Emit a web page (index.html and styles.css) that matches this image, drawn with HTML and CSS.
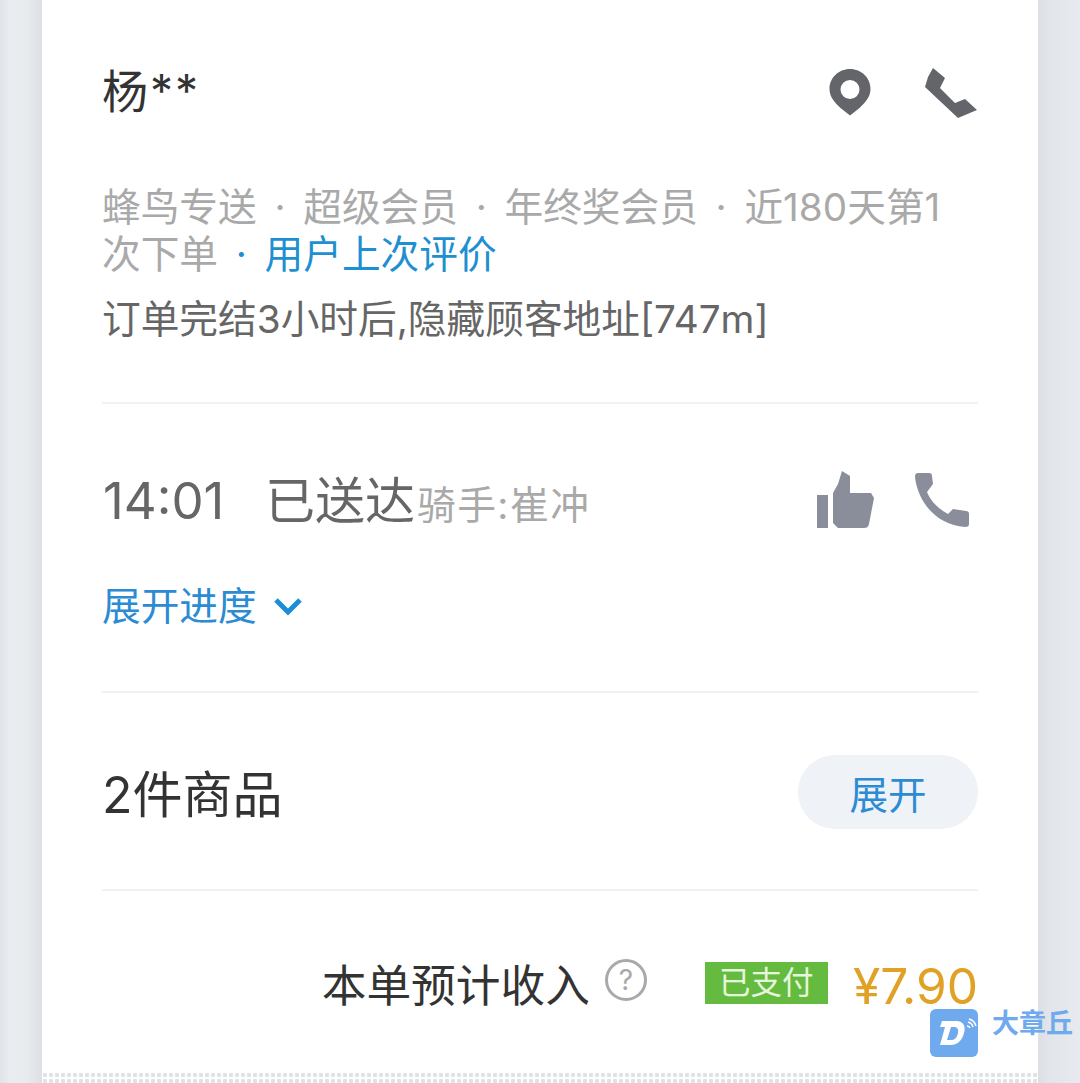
FILE: index.html
```html
<!DOCTYPE html>
<html lang="zh">
<head>
<meta charset="utf-8">
<title>订单详情</title>
<link rel="stylesheet" href="styles.css">
</head>
<body>
<main class="card">
  <section class="sec customer">
    <div class="row name-row">
      <div class="name">杨**</div>
      <div class="icons top-icons">
        <svg width="44" height="48" viewBox="0 0 44 48"><path fill="#63656b" fill-rule="evenodd" d="M22 1C10.400 1 1.500 10 1.500 21c0 8 5 13 11 19L22 47.500 31.500 40c6-6 11-11 11-19C42.500 10 33.600 1 22 1zm0 11a9.500 9.500 0 1 1 0 19 9.500 9.500 0 0 1 0-19z"/></svg>
        <svg width="54" height="54" viewBox="0 0 54 54"><path fill="#63656b" d="M8 3 20 13 15 23 30 38 40 34 52 45 33 53 0 22 3 12z"/></svg>
      </div>
    </div>
    <p class="tags">蜂鸟专送<span class="sep">·</span>超级会员<span class="sep">·</span>年终奖会员<span class="sep">·</span>近180天第1次下单<span class="sep blue">·</span><span class="blue">用户上次评价</span></p>
    <p class="addr">订单完结3小时后,隐藏顾客地址[747m]</p>
  </section>
  <section class="sec rider">
    <div class="row status-row">
      <div class="status"><span class="time">14:01</span><span class="state">已送达</span><span class="who">骑手:崔冲</span></div>
      <div class="icons rider-icons">
        <svg width="58" height="58" viewBox="0 0 58 58"><path fill="#8a8e9b" d="M1 24h11v33H1zM17 22 22 13 26 0 34 5V22H55L58 27 53 53C52 56 51 57 48 57H22L17 52z"/></svg>
        <svg width="55" height="55" viewBox="0 0 55 55"><path fill="#8a8e9b" d="M3 0H14C16 0 17 1 17 3L18 11 12 19C16 29 24 36 33 41L38 36 51 38C53 38 54 39 54 41V51C54 53 53 54 50 54 22 52 3 30 0 4 0 1 1 0 3 0z"/></svg>
      </div>
    </div>
    <div class="expand">展开进度
      <svg width="30" height="20" viewBox="0 0 30 20"><path fill="none" stroke="#1a8fd8" stroke-width="5" d="M3 3 15 15 27 3"/></svg>
    </div>
  </section>
  <section class="sec goods">
    <div class="count">2件商品</div>
    <button class="pill">展开</button>
  </section>
  <section class="income">
    <span class="inc-label">本单预计收入</span>
    <span class="help">?</span>
    <span class="paid">已支付</span>
    <span class="price">¥7.90</span>
  </section>
  <div class="dots"></div>
</main>
<div class="mark">
  <svg width="48" height="48" viewBox="0 0 48 48"><rect width="48" height="48" rx="6" fill="#6fa9ee"/><path fill="#fff" fill-rule="evenodd" d="M12 12H26C34 12 36 18 34 24 32 32 27 36 21 36H10L15 18H10zM21 18 17 31H22C25 31 27 28 28 24 29 20 27 18 24 18z"/><path fill="none" stroke="#fff" stroke-width="1.500" d="M37 17a3 3 0 0 1 3 2M38 13a7 7 0 0 1 5 5M39 10a10 10 0 0 1 7 7"/></svg>
  <span class="mark-text">大章丘</span>
</div>
</body>
</html>
```
FILE: styles.css
```css
* { box-sizing: border-box; }
html, body { margin: 0; height: 1083px; overflow: hidden; }
body {
  position: relative;
  background: linear-gradient(90deg, #e0e4e9 0, #e9edf0 10px, #e7ebee 28px, #dcdfe3 42px, #dcdfe3 1038px, #e2e5e9 1050px, #e7ebef 1080px);
  font-family: Inter, "Noto Sans CJK SC", sans-serif;
  color: #333;
}
.card {
  position: relative;
  width: 996px;
  height: 1083px;
  margin-left: 42px;
  background: #fff;
  padding: 0 60px;
}
.sec { border-bottom: 2px solid #edf2f5; }
.row { display: flex; justify-content: space-between; align-items: center; }
.customer { height: 404px; padding-top: 64px; }
.name-row { height: 56px; }
.name { font-size: 46px; line-height: 48px; padding-bottom: 2px; letter-spacing: 2px; color: #333; }
.icons { display: flex; align-items: center; gap: 53px; }
.top-icons { margin-right: -1px; }
.tags {
  margin: 64px 0 0;
  font-size: 38.700px;
  line-height: 47px;
  color: #a9a9a9;
  width: 850px;
}
.sep { display: inline-block; width: 46.500px; text-align: center; }
.blue { color: #1e8fd0; }
.addr { margin: 18px 0 0; font-size: 38.700px; line-height: 47px; color: #666; white-space: nowrap; }
.rider { height: 289px; padding-top: 65px; }
.status-row { height: 62px; }
.status { display: flex; align-items: baseline; white-space: nowrap; color: #666; padding-bottom: 6px; }
.time { font-size: 51px; width: 165px; padding-left: 1px; }
.state { font-size: 50px; margin-left: -2px; }
.who { font-size: 38.700px; letter-spacing: 1.500px; margin-left: 2px; color: #a9a9a9; }
.rider-icons { gap: 41px; padding-right: 8px; }
.expand {
  display: flex;
  align-items: center;
  gap: 16px;
  margin-top: 52px;
  font-size: 38.700px;
  line-height: 47px;
  color: #2b8bd3;
}
.goods {
  height: 198px;
  display: flex;
  justify-content: space-between;
  align-items: center;
}
.count { font-size: 50px; color: #333; }
.pill {
  width: 180px;
  height: 74px;
  margin-top: 2px;
  border: 0;
  border-radius: 37px;
  background: #eff2f6;
  color: #2b8bd3;
  font: inherit;
  font-size: 38.500px;
}
.income {
  display: flex;
  align-items: center;
  justify-content: flex-end;
  height: 190px;
  padding-bottom: 6px;
  white-space: nowrap;
}
.inc-label { font-size: 44.700px; color: #333; margin-top: -2px; }
.help {
  width: 42px;
  height: 42px;
  margin: -6px 58px 0 15px;
  border: 3px solid #a9a9a9;
  border-radius: 50%;
  color: #a9a9a9;
  font-size: 28px;
  line-height: 36px;
  text-align: center;
}
.paid {
  width: 123px;
  height: 42px;
  margin-top: -1px;
  background: #65bb3f;
  color: #e6f6dc;
  font-size: 31.500px;
  line-height: 42px;
  text-align: center;
}
.price { margin-left: 25px; margin-top: 5px; font-size: 49.600px; line-height: 56px; color: #e0a124; }
.dots {
  position: absolute;
  left: 0;
  right: 0;
  bottom: 0;
  height: 10px;
  background: radial-gradient(circle at 3px 2px, #dfe2e6 2px, transparent 2.500px) 0 0 / 6px 6px;
}
.mark {
  position: absolute;
  left: 930px;
  top: 1009px;
  display: flex;
  align-items: flex-start;
  gap: 14px;
}
.mark-text { font-size: 27px; line-height: 30px; color: #6fa9ee; font-weight: 700; }
```
